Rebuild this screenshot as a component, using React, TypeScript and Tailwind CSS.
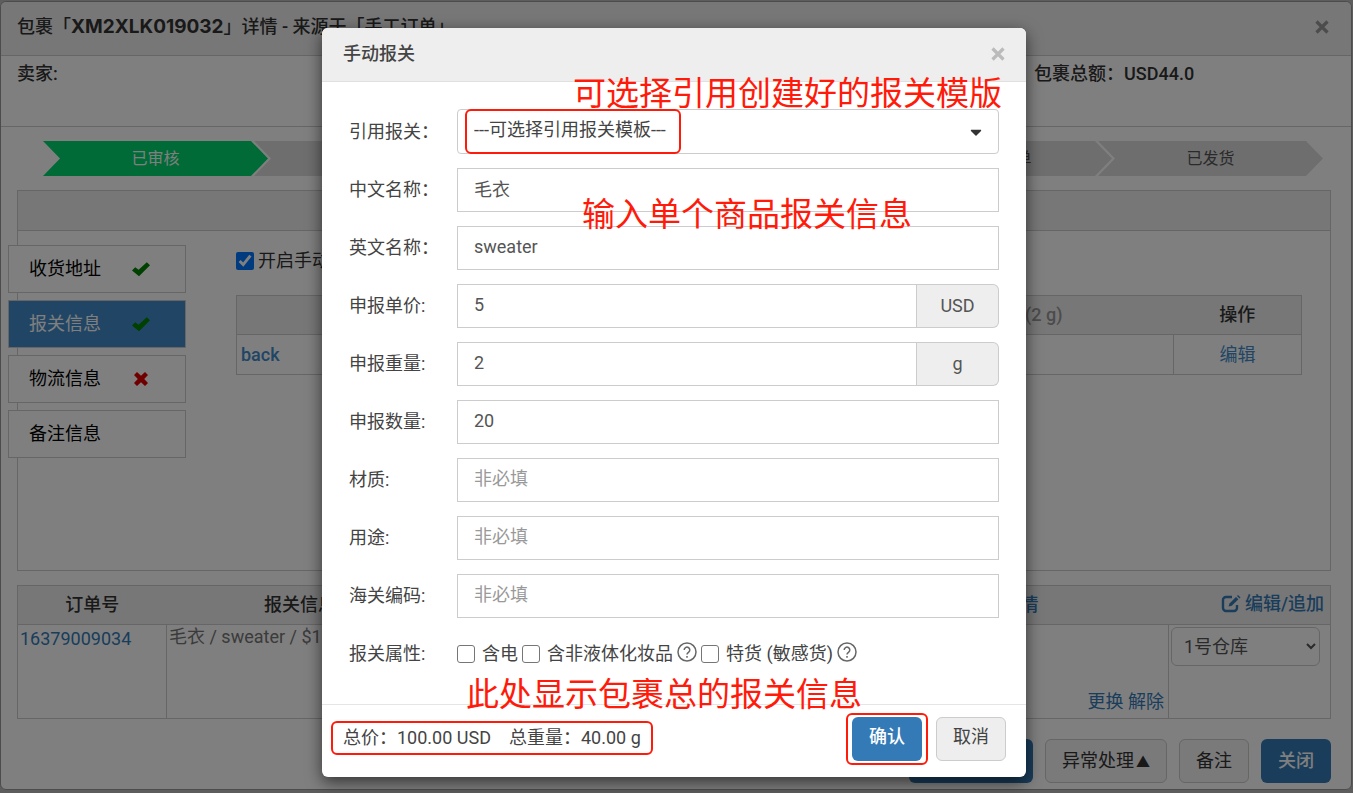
import { useState } from "react";
import type { ReactNode } from "react";
import { FaCaretDown } from "react-icons/fa";

type Step = { label: string; done: boolean };
type Tab = { label: string; status?: "ok" | "error" };
type Field = { id: string; label: string; value: string; placeholder?: string; unit?: string };

const steps: Step[] = [
  { label: "已审核", done: true },
  { label: "", done: false },
  { label: "", done: false },
  { label: "", done: false },
  { label: "生成运单", done: false },
  { label: "已发货", done: false },
];

const tabs: Tab[] = [
  { label: "收货地址", status: "ok" },
  { label: "报关信息", status: "ok" },
  { label: "物流信息", status: "error" },
  { label: "备注信息" },
];

const initialFields: Field[] = [
  { id: "nameCn", label: "中文名称：", value: "毛衣" },
  { id: "nameEn", label: "英文名称：", value: "sweater" },
  { id: "price", label: "申报单价:", value: "5", unit: "USD" },
  { id: "weight", label: "申报重量:", value: "2", unit: "g" },
  { id: "qty", label: "申报数量:", value: "20" },
  { id: "material", label: "材质:", value: "", placeholder: "非必填" },
  { id: "usage", label: "用途:", value: "", placeholder: "非必填" },
  { id: "hsCode", label: "海关编码:", value: "", placeholder: "非必填" },
];

function CheckIcon() {
  return (
    <svg viewBox="0 0 20 16" className="mr-0.5 h-4 w-5 text-[#008000]" fill="currentColor">
      <path d="M1 9.500L4.200 6.300L7.600 8.800L15.800 1.200L19 4.200L8 15.200Z" />
    </svg>
  );
}

function RemoveIcon() {
  return (
    <svg viewBox="0 0 16 16" className="mr-1 size-4 text-[#e00000]" fill="currentColor">
      <path d="M1 4L4 1L8 4.800L12 1L15 4L11.200 8L15 12L12 15L8 11.200L4 15L1 12L4.800 8Z" />
    </svg>
  );
}

function CloseIcon() {
  return (
    <svg viewBox="0 0 14 14" className="size-3.5" fill="none" stroke="currentColor" strokeWidth="3.2">
      <path d="M1.500 1.500l11 11M12.500 1.500l-11 11" />
    </svg>
  );
}

function EditIcon() {
  return (
    <svg viewBox="0 0 20 18" className="h-[18px] w-5" fill="none" stroke="currentColor" strokeWidth="2.4">
      <path d="M11 2H5a3 3 0 0 0-3 3v8a3 3 0 0 0 3 3h8a3 3 0 0 0 3-3v-3" />
      <path d="M7.500 11.500l1-3L15 2l2.400 2.200-6.600 6.600z" fill="currentColor" stroke="none" />
      <path d="M16 1l1-1 2.500 2.400-1 1z" fill="currentColor" stroke="none" />
    </svg>
  );
}

function HelpIcon() {
  return (
    <svg viewBox="0 0 20 20" className="mb-1 size-5 shrink-0" fill="none" stroke="#666" strokeWidth="1.5">
      <circle cx="10" cy="10" r="9" />
      <path d="M7.200 8a2.800 2.800 0 1 1 4.300 2.300c-1 .7-1.500 1.100-1.500 2.200" />
      <path d="M10 14v1.700" />
    </svg>
  );
}

function Note({ className, children }: { className: string; children: ReactNode }) {
  return (
    <p className={`pointer-events-none absolute whitespace-nowrap text-[33px] leading-10 text-[#ff1a0a] ${className}`}>
      {children}
    </p>
  );
}

function CheckOption({ label }: { label: string }) {
  return (
    <label className="flex items-center gap-[7px] whitespace-nowrap">
      <input type="checkbox" className="size-[18px] appearance-none rounded-[3px] border border-[#767676] bg-white" />
      {label}
    </label>
  );
}

function PackageDetail() {
  const [activeTab, setActiveTab] = useState("报关信息");

  return (
    <div className="mr-px mt-px rounded-md border border-[#999] bg-white">
      <header className="flex h-[54px] items-center justify-between rounded-t-md border-b border-[#ccc] bg-[#eee] pr-[22px] pb-1 pl-4">
        <h1 className="text-lg font-medium">
          包裹「<span className="font-[Inter] text-[19px] font-bold">XM2XLK019032</span>」详情 - 来源于「手工订单」
        </h1>
        <button aria-label="关闭详情" className="text-[#999]"><CloseIcon /></button>
      </header>

      <section className="flex h-[71px] border-b border-[#ccc] pt-1 pl-4 font-medium leading-7">
        <p className="w-[1017px]">卖家:</p>
        <p>包裹总额：USD44.0</p>
      </section>

      <ol className="mt-3.5 mr-7 ml-[42px] flex text-base">
        {steps.map((step, i) => (
          <li
            key={i}
            className={`-mr-3.5 flex h-[35px] flex-1 items-center justify-center [clip-path:polygon(0_0,calc(100%-17px)_0,100%_50%,calc(100%-17px)_100%,0_100%,17px_50%)] last:mr-0 ${step.done ? "bg-[#00d66e] text-white" : "bg-[#ddd] text-[#555]"}`}
          >
            {step.label}
          </li>
        ))}
      </ol>

      <div className="mt-3.5 mr-5 ml-4 border border-[#ccc]">
        <div className="h-10 border-b border-[#ccc] bg-[#eee]" />
        <div className="flex min-h-[339px] items-start pt-3.5">
          <nav className="-ml-2.5 flex w-[178px] shrink-0 flex-col gap-[7px]">
            {tabs.map((tab) => (
              <button
                key={tab.label}
                onClick={() => setActiveTab(tab.label)}
                className={`flex h-12 items-center justify-between border border-[#ccc] pr-8 pl-5 ${activeTab === tab.label ? "bg-[#428bca] text-white" : "bg-white text-black"}`}
              >
                {tab.label}
                {tab.status === "ok" && <CheckIcon />}
                {tab.status === "error" && <RemoveIcon />}
              </button>
            ))}
          </nav>
          <div className="mr-7 ml-[50px] flex-1">
            <label className="flex h-8 items-center gap-1">
              <input type="checkbox" defaultChecked className="size-[18px] accent-[#0075ff]" />
              开启手动报关
            </label>
            <table className="mt-[18px] w-full border border-[#ccc]">
              <thead>
                <tr className="h-[39px] bg-[#eee]">
                  <th className="pr-[111px] text-right font-medium text-[#999]">重量 (2 g)</th>
                  <th className="w-32 font-medium">操作</th>
                </tr>
              </thead>
              <tbody>
                <tr className="h-10 border-t border-[#ccc] text-[#428bca]">
                  <td className="pl-1 font-medium"><a href="#back">back</a></td>
                  <td className="border-l border-[#ccc] text-center"><a href="#edit">编辑</a></td>
                </tr>
              </tbody>
            </table>
          </div>
        </div>
      </div>

      <div className="mt-3.5 mr-5 ml-4">
        <table className="w-full table-fixed border border-[#ccc]">
          <thead>
            <tr className="h-[39px] bg-[#eee]">
              <th className="w-[149px] font-medium">订单号</th>
              <th className="w-[267px] font-medium">报关信息</th>
              <th className="pr-[130px] text-right font-medium text-[#337ab7]">详情</th>
              <th className="w-[162px] pr-1.5 text-right font-medium text-[#337ab7]">
                <a href="#append" className="inline-flex items-center gap-1"><EditIcon />编辑/追加</a>
              </th>
            </tr>
          </thead>
          <tbody>
            <tr className="h-[94px] border-t border-[#ccc] align-top text-[#337ab7]">
              <td className="pt-0.5 pl-0.5"><a href="#order">16379009034</a></td>
              <td className="overflow-hidden border-l border-[#ccc] pl-0.5 whitespace-nowrap text-[#777]">毛衣 / sweater / $1 / 2g</td>
              <td className="pr-1 pb-1 text-right align-bottom"><a href="#change">更换</a> <a href="#release">解除</a></td>
              <td className="border-l border-[#ccc] pt-0.5 pl-0.5">
                <select aria-label="仓库" className="h-[39px] w-[149px] rounded-md border border-[#ccc] bg-white px-2 text-[#555]">
                  <option>1号仓库</option>
                </select>
              </td>
            </tr>
          </tbody>
        </table>
      </div>

      <footer className="mt-5 mr-5 mb-1.5 flex justify-end gap-3">
        <button className="h-11 w-[124px] rounded-md bg-[#337ab7] text-white">提交</button>
        <button className="h-11 w-[122px] rounded-md border border-[#ccc] bg-[#f4f4f4]">异常处理<span className="ml-0.5 text-sm">▲</span></button>
        <button className="h-11 w-[70px] rounded-md border border-[#ccc] bg-[#f4f4f4]">备注</button>
        <button className="h-11 w-[70px] rounded-md bg-[#337ab7] font-medium text-white">关闭</button>
      </footer>
    </div>
  );
}

function CustomsDialog() {
  const [fields, setFields] = useState(initialFields);

  const updateField = (id: string, value: string) => {
    setFields(fields.map((f) => (f.id === id ? { ...f, value } : f)));
  };

  return (
    <div role="dialog" aria-labelledby="dialog-title" className="relative w-[704px] rounded-md bg-white text-[#444] shadow-[0_5px_16px_rgba(0,0,0,0.6)]">
      <header className="flex h-[54px] items-center justify-between rounded-t-md border-b border-[#e0e0e0] bg-[#eee] px-[21px] pb-0.5">
        <h2 id="dialog-title" className="font-medium">手动报关</h2>
        <button aria-label="关闭" className="text-[#bbb]"><CloseIcon /></button>
      </header>

      <div className="flex flex-col gap-3.5 px-[27px] pt-[27px] pb-7">
        <div className="flex items-center">
          <label htmlFor="template" className="w-[108px]">引用报关：</label>
          <div className="relative flex-1">
            <select id="template" className="h-[45px] w-full appearance-none rounded-sm border border-[#ccc] bg-white px-4 pb-1">
              <option>---可选择引用报关模板---</option>
            </select>
            <FaCaretDown className="pointer-events-none absolute top-3.5 right-3.5 text-[#333]" size={18} />
            <span className="pointer-events-none absolute top-0 left-2 h-[45px] w-[216px] rounded-md border-2 border-[#ff1a0a]" />
          </div>
        </div>

        {fields.map((f) => (
          <div key={f.id} className="flex items-center">
            <label htmlFor={f.id} className="w-[108px]">{f.label}</label>
            <input
              id={f.id}
              value={f.value}
              placeholder={f.placeholder}
              onChange={(e) => updateField(f.id, e.target.value)}
              className="h-11 min-w-0 flex-1 border border-[#ccc] px-4 pb-1 text-[#555] placeholder:text-[#999]"
            />
            {f.unit && (
              <span className="flex h-11 w-[82px] items-center justify-center rounded-r-md border border-l-0 border-[#ccc] bg-[#eee] text-[#555]">
                {f.unit}
              </span>
            )}
          </div>
        ))}

        <div className="flex h-11 items-center">
          <span className="w-[108px]">报关属性:</span>
          <div className="flex items-center gap-1">
            <CheckOption label="含电" />
            <CheckOption label="含非液体化妆品" />
            <HelpIcon />
            <CheckOption label="特货 (敏感货)" />
            <HelpIcon />
          </div>
        </div>
      </div>

      <footer className="flex h-[73px] items-start justify-between border-t border-[#e5e5e5] pt-2 pr-5 pl-[9px]">
        <p className="mt-2 flex h-[34px] w-[322px] items-center gap-[18px] rounded-md border-2 border-[#ff1a0a] px-2.5 whitespace-nowrap">
          <span>总价：100.00 USD</span>
          <span>总重量：40.00 g</span>
        </p>
        <div className="flex items-center gap-2">
          <span className="rounded-md border-2 border-[#ff1a0a] px-1 py-0.5">
            <button className="block h-11 w-[70px] rounded-md bg-[#337ab7] pb-1 font-medium text-white">确认</button>
          </span>
          <button className="h-11 w-[70px] rounded-md border border-[#ccc] bg-[#eee] pb-1">取消</button>
        </div>
      </footer>

      <Note className="top-[46px] left-[251px]">可选择引用创建好的报关模版</Note>
      <Note className="top-[167px] left-[260px]">输入单个商品报关信息</Note>
      <Note className="top-[647px] left-[144px]">此处显示包裹总的报关信息</Note>
    </div>
  );
}

export default function App() {
  return (
    <main className="relative min-h-screen overflow-hidden bg-[#bbb] font-[Roboto,'Noto_Sans_CJK_SC',sans-serif] text-lg leading-6 text-[#333]">
      <PackageDetail />
      <div className="absolute inset-0 flex items-start justify-center bg-black/50 pt-7 pr-[5px]">
        <CustomsDialog />
      </div>
    </main>
  );
}
